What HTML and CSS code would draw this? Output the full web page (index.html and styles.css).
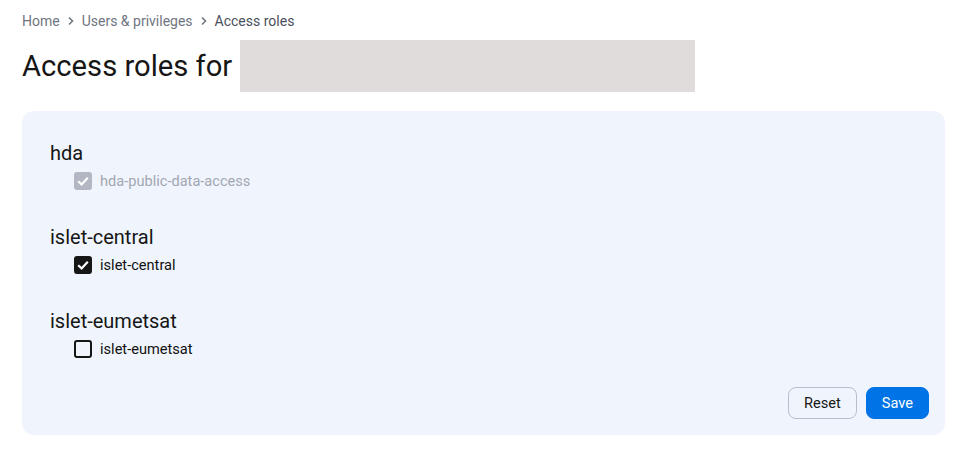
FILE: index.html
```html
<!DOCTYPE html>
<html lang="en">
<head>
    <meta charset="UTF-8">
    <meta name="viewport" content="width=device-width, initial-scale=1.0">
    <title>Access roles</title>
    <link rel="stylesheet" href="styles.css">
</head>
<body>
    <div class="page">
        <nav class="breadcrumb">
            <a href="#">Home</a>
            <svg class="chevron" viewBox="0 0 8 10"><path d="M2 1.5 5.5 5 2 8.5" fill="none" stroke="currentColor" stroke-width="1.6"/></svg>
            <a href="#">Users &amp; privileges</a>
            <svg class="chevron" viewBox="0 0 8 10"><path d="M2 1.5 5.5 5 2 8.5" fill="none" stroke="currentColor" stroke-width="1.6"/></svg>
            <span class="current">Access roles</span>
        </nav>
        <h1 class="title">Access roles for <span class="redacted"></span></h1>

        <form class="card">
            <div class="group">
                <h2>hda</h2>
                <label class="role disabled">
                    <input type="checkbox" checked disabled>
                    <span class="box"><svg viewBox="0 0 18 18"><path d="M4.2 9.2 7.6 12.4 13.8 5.8" fill="none" stroke="#fff" stroke-width="2.2"/></svg></span>
                    hda-public-data-access
                </label>
            </div>
            <div class="group">
                <h2>islet-central</h2>
                <label class="role">
                    <input type="checkbox" checked>
                    <span class="box"><svg viewBox="0 0 18 18"><path d="M4.2 9.2 7.6 12.4 13.8 5.8" fill="none" stroke="#fff" stroke-width="2.2"/></svg></span>
                    islet-central
                </label>
            </div>
            <div class="group">
                <h2>islet-eumetsat</h2>
                <label class="role">
                    <input type="checkbox">
                    <span class="box"><svg viewBox="0 0 18 18"><path d="M4.2 9.2 7.6 12.4 13.8 5.8" fill="none" stroke="#fff" stroke-width="2.2"/></svg></span>
                    islet-eumetsat
                </label>
            </div>
            <div class="actions">
                <button type="reset" class="btn btn-outline">Reset</button>
                <button type="button" class="btn btn-primary">Save</button>
            </div>
        </form>
    </div>
</body>
</html>
```

FILE: styles.css
```css
body {
    margin: 0;
    font-family: Roboto, "Liberation Sans", sans-serif;
    color: #1a1a1a;
    background: #fff;
}
.page {
    padding: 11px 27px 0 22px;
}
.breadcrumb {
    display: flex;
    align-items: center;
    gap: 7px;
    font-size: 14px;
    line-height: 20px;
    color: #70757f;
}
.breadcrumb a {
    color: inherit;
    text-decoration: none;
}
.breadcrumb .current {
    color: #4a505b;
}
.chevron {
    width: 8px;
    height: 10px;
    color: #70757f;
}
.title {
    display: flex;
    align-items: center;
    margin: 9px 0 19px;
    font-size: 29.2px;
    font-weight: 400;
    line-height: 52px;
    color: #161616;
}
.redacted {
    display: inline-block;
    width: 455px;
    height: 52px;
    margin-left: 8px;
    background: #e0dcdc;
}
.card {
    background: #f0f5fd;
    border-radius: 12px;
    padding: 28px 16px 16px 28px;
}
.group {
    margin-bottom: 30px;
}
.group:nth-last-child(2) {
    margin-bottom: 26px;
}
.group h2 {
    margin: 0;
    font-size: 20px;
    font-weight: 400;
    line-height: 28px;
    color: #161616;
}
.role {
    display: flex;
    align-items: center;
    gap: 8px;
    height: 24px;
    margin-top: 2px;
    padding-left: 24px;
    font-size: 14.6px;
    color: #111;
    cursor: pointer;
}
.role input {
    display: none;
}
.box {
    width: 18px;
    height: 18px;
    box-sizing: border-box;
    border: 2px solid #161616;
    border-radius: 3px;
    display: flex;
    align-items: center;
    justify-content: center;
    overflow: hidden;
}
.box svg {
    flex: none;
    width: 18px;
    height: 18px;
    visibility: hidden;
}
.role input:checked + .box {
    background: #161616;
}
.role input:checked + .box svg {
    visibility: visible;
}
.role.disabled {
    color: #a3a7b2;
    cursor: default;
}
.role.disabled input:checked + .box {
    background: #b3b6c3;
    border-color: #b3b6c3;
}
.actions {
    display: flex;
    justify-content: flex-end;
    gap: 9px;
}
.btn {
    height: 32px;
    padding: 0 15px;
    border-radius: 8px;
    font-family: inherit;
    font-size: 14.6px;
    cursor: pointer;
}
.btn-outline {
    background: transparent;
    border: 1px solid #b9bdc7;
    color: #161616;
}
.btn-primary {
    background: #0073e6;
    border: 1px solid #0073e6;
    color: #fff;
}
```
